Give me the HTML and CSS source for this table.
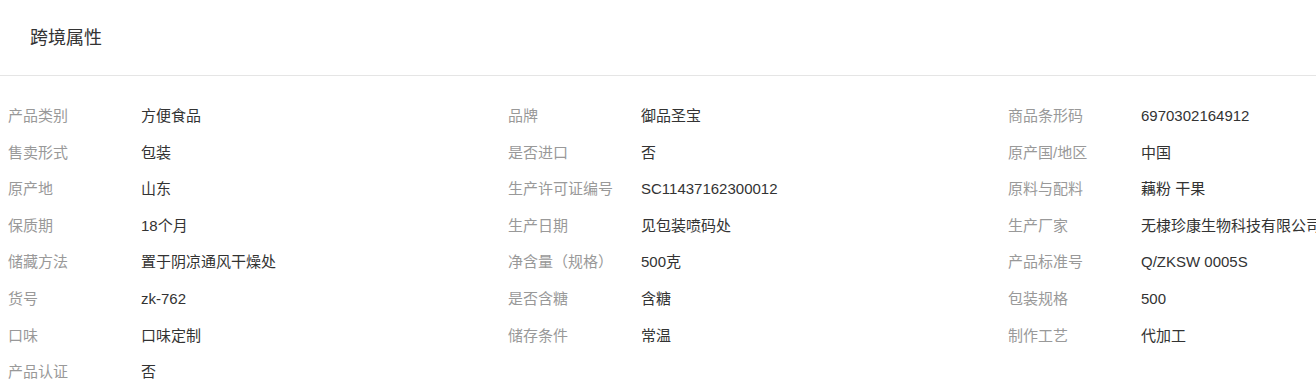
FILE: index.html
```html
<!DOCTYPE html>
<html lang="zh-CN">
<head>
    <meta charset="UTF-8">
    <meta name="viewport" content="width=device-width, initial-scale=1.0">
    <title>跨境属性</title>
    <link rel="stylesheet" href="styles.css">
</head>
<body>
    <div class="panel">
        <div class="panel-header">
            <h2>跨境属性</h2>
        </div>
        <div class="attr-list">
            <div class="attr-item"><span class="attr-label">产品类别</span><span class="attr-value">方便食品</span></div>
            <div class="attr-item"><span class="attr-label">品牌</span><span class="attr-value">御品圣宝</span></div>
            <div class="attr-item"><span class="attr-label">商品条形码</span><span class="attr-value">6970302164912</span></div>

            <div class="attr-item"><span class="attr-label">售卖形式</span><span class="attr-value">包装</span></div>
            <div class="attr-item"><span class="attr-label">是否进口</span><span class="attr-value">否</span></div>
            <div class="attr-item"><span class="attr-label">原产国/地区</span><span class="attr-value">中国</span></div>

            <div class="attr-item"><span class="attr-label">原产地</span><span class="attr-value">山东</span></div>
            <div class="attr-item"><span class="attr-label">生产许可证编号</span><span class="attr-value">SC11437162300012</span></div>
            <div class="attr-item"><span class="attr-label">原料与配料</span><span class="attr-value">藕粉 干果</span></div>

            <div class="attr-item"><span class="attr-label">保质期</span><span class="attr-value">18个月</span></div>
            <div class="attr-item"><span class="attr-label">生产日期</span><span class="attr-value">见包装喷码处</span></div>
            <div class="attr-item"><span class="attr-label">生产厂家</span><span class="attr-value">无棣珍康生物科技有限公司</span></div>

            <div class="attr-item"><span class="attr-label">储藏方法</span><span class="attr-value">置于阴凉通风干燥处</span></div>
            <div class="attr-item"><span class="attr-label">净含量（规格）</span><span class="attr-value">500克</span></div>
            <div class="attr-item"><span class="attr-label">产品标准号</span><span class="attr-value">Q/ZKSW 0005S</span></div>

            <div class="attr-item"><span class="attr-label">货号</span><span class="attr-value">zk-762</span></div>
            <div class="attr-item"><span class="attr-label">是否含糖</span><span class="attr-value">含糖</span></div>
            <div class="attr-item"><span class="attr-label">包装规格</span><span class="attr-value">500</span></div>

            <div class="attr-item"><span class="attr-label">口味</span><span class="attr-value">口味定制</span></div>
            <div class="attr-item"><span class="attr-label">储存条件</span><span class="attr-value">常温</span></div>
            <div class="attr-item"><span class="attr-label">制作工艺</span><span class="attr-value">代加工</span></div>

            <div class="attr-item"><span class="attr-label">产品认证</span><span class="attr-value">否</span></div>
        </div>
    </div>
</body>
</html>
```

FILE: styles.css
```css
body {
    margin: 0;
    padding: 0;
    background: #fff;
    color: #333;
    font-family: 'Liberation Sans', 'Noto Sans CJK SC', sans-serif;
    overflow: hidden;
}

.panel {
    width: 100%;
}

.panel-header {
    height: 75px;
    display: flex;
    align-items: center;
    padding: 0 30px;
    border-bottom: 1px solid #e5e5e5;
}

.panel-header h2 {
    margin: 0;
    font-size: 18px;
    font-weight: normal;
    color: #333;
    line-height: 1;
}

/* three fixed-width columns, the last one runs past the panel edge */
.attr-list {
    display: grid;
    grid-template-columns: repeat(3, 500px);
    padding: 22px 0 0 8px;
}

.attr-item {
    display: flex;
    font-size: 15px;
    line-height: 22.6px;
    padding: 7px 0;
    white-space: nowrap;
}

.attr-label {
    width: 133px;
    flex-shrink: 0;
    color: #999;
}

.attr-value {
    color: #333;
}
```
